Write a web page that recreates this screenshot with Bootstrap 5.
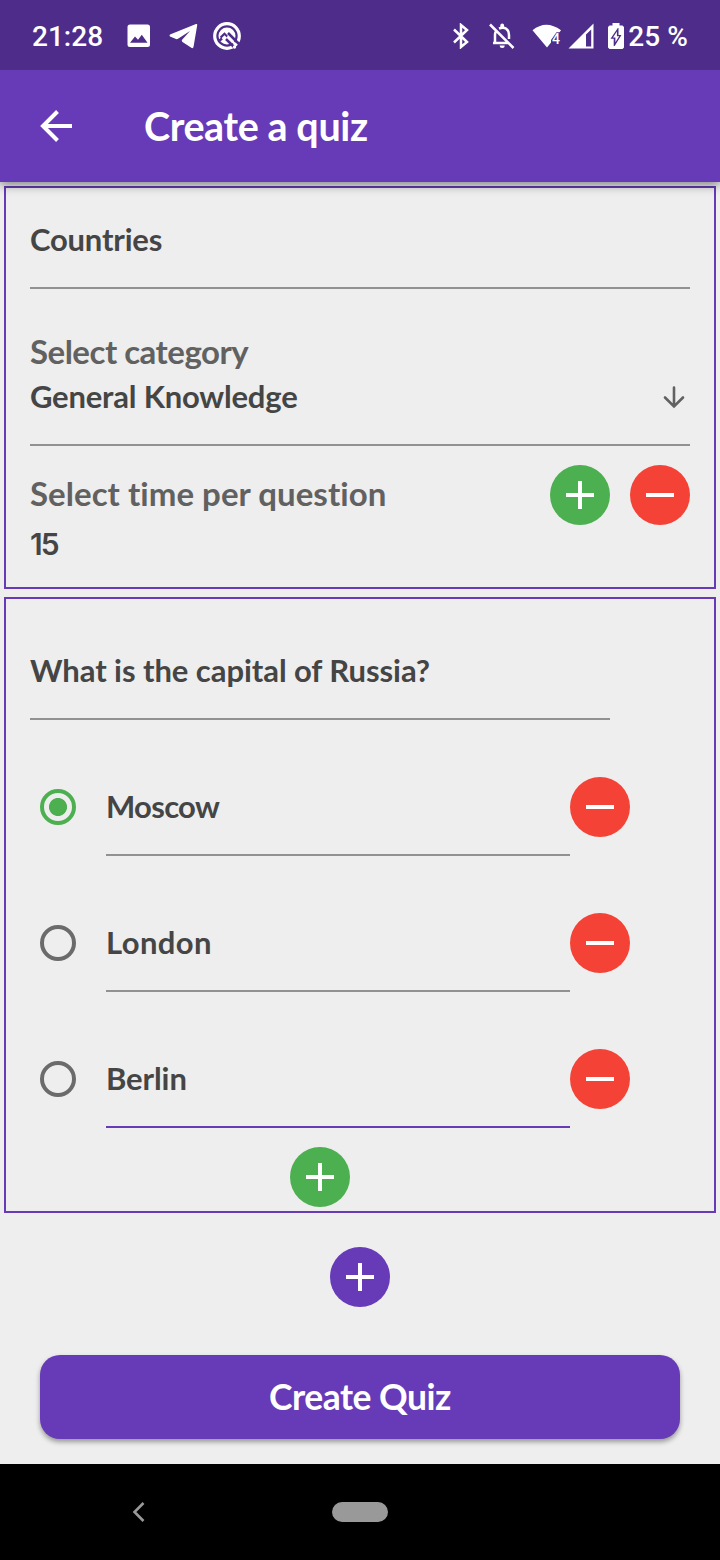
<!DOCTYPE html>
<html lang="en">
<head>
<meta charset="utf-8">
<meta name="viewport" content="width=device-width, initial-scale=1">
<title>Create a quiz</title>
<link href="https://cdn.jsdelivr.net/npm/bootstrap@5.3.0/dist/css/bootstrap.min.css" rel="stylesheet">
<style>
  :root { --violet: #673ab7; --leaf: #4caf50; --tomato: #f44336; --ink: #454545; --muted: #616161; }
  body { width: 720px; height: 1560px; background: #eee; font-family: Lato, "Open Sans", sans-serif; color: var(--ink); overflow: hidden; }
  svg { display: block; flex: none; }
  .status-bar { height: 70px; background: #4e2c8a; padding: 2px 32px 0; font: 500 28px/1 Roboto, sans-serif; z-index: 2; }
  .status-bar span { padding-top: 2px; }
  .app-bar { height: 112px; background: var(--violet); padding: 0 40px; position: relative; z-index: 1; box-shadow: 0 3px 10px rgba(0,0,0,.45); }
  .app-title { font-size: 39.500px; font-weight: 700; letter-spacing: -.4px; margin: 0 0 1px 72px; line-height: 1; }
  .panel { border: 2px solid var(--violet); margin: 0 4px; padding: 0 24px; }
  .panel-setup { margin-top: 4px; height: 403px; padding-top: 3px; }
  .panel-question { margin-top: 8px; height: 616px; padding-top: 23px; }
  .field { height: 98px; border-bottom: 2px solid #919191; display: flex; align-items: center; font-size: 31px; font-weight: 700; line-height: 1; letter-spacing: -.2px; }
  .field.active { border-color: var(--violet); }
  .question-col { width: 580px; }
  .caption-text { color: var(--muted); font-size: 33px; font-weight: 700; line-height: 1; letter-spacing: -.5px; }
  .category { height: 157px; padding-top: 46px; border-bottom: 2px solid #919191; }
  .value-text { font-size: 31px; font-weight: 700; line-height: 32px; letter-spacing: -.2px; }
  .time-value { font-family: Inter, sans-serif; font-size: 30px; font-weight: 600; letter-spacing: -2px; }
  .disc { width: 60px; height: 60px; padding: 0; border: 0; border-radius: 50%; display: flex; align-items: center; justify-content: center; flex: none; }
  .disc-add { background: var(--leaf); } .disc-del { background: var(--tomato); } .disc-main { background: var(--violet); }
  .answer { padding-top: 38px; width: 600px; }
  .pick { width: 36px; height: 36px; border: 4px solid #6b6b6b; border-radius: 50%; margin: 0 30px 0 10px; flex: none; }
  .pick.on { border-color: var(--leaf); background: radial-gradient(circle, var(--leaf) 8.6px, transparent 9.4px); }
  .btn-create { height: 84px; margin: 48px 40px 25px; border-radius: 20px; background: var(--violet) !important; color: #fff !important; border: 0; font-size: 35.500px; font-weight: 700; letter-spacing: -.5px; box-shadow: 0 3px 5px rgba(0,0,0,.36); line-height: 1; padding: 0; }
  .nav-keys { height: 96px; background: #000; padding-left: 132px; }
  .home-pill { width: 56px; height: 20px; background: #999; margin-left: 186px; }
</style>
</head>
<body class="d-flex flex-column">
<header>
  <div class="status-bar d-flex align-items-center text-white position-relative">
    <span>21:28</span>
    <svg style="margin-left:24px;margin-top:-1px" width="24" height="24" viewBox="0 0 24 24"><path fill="#fff" fill-rule="evenodd" d="M3 .5h17.500a2.500 2.500 0 0 1 2.500 2.500v17.500a2.500 2.500 0 0 1-2.500 2.500H3A2.500 2.500 0 0 1 .5 20.500V3A2.500 2.500 0 0 1 3 .5zM3 18.800h17.500l-5.700-8-3.800 5-3-3.300z"/></svg>
    <svg style="margin-left:18px" width="30" height="26" viewBox="0 0 30 26"><path fill="#fff" d="M1 11.500 27 1q1.500-.5 1.200 1.200L24.500 24q-.5 1.800-2.200.8L13.500 19q-1.500-1-.2-2.400L21 8 9 15.800q-1 .6-2 .2L1 13.500Q0 12.500 1 11.500z"/></svg>
    <svg style="margin-left:14px;margin-top:-1px" width="30" height="30" viewBox="0 0 30 30" fill="none"><circle cx="14" cy="15" r="12.300" stroke="#fff" stroke-width="3.200"/><circle cx="14" cy="15" r="8.500" fill="#fff"/><path fill="#4e2c8a" d="m7 15.500 4.500-4.200L15 15l-1.200 1.500-2.300-2.300L8 17.800z"/><path stroke="#4e2c8a" stroke-width="2.600" d="M6.500 19.500 9 17.500M15 12l12 12M13 18l9.500 9.500"/><path stroke="#fff" stroke-width="2.200" d="m14.500 15.500 7.500 7.500"/><circle cx="21.500" cy="26" r="1.700" fill="#fff"/></svg>
    <svg class="ms-auto" width="18" height="26" viewBox="0 0 18 26" fill="none" stroke="#fff" stroke-width="2.500"><path d="m2 6.500 13 12.500-6 5V2l6 5L2 19.500"/></svg>
    <svg style="margin-left:19px" width="26" height="26" viewBox="0 0 26 26" fill="none" stroke="#fff" stroke-width="2.500"><path d="M1 1.500 24.500 25M4 20h16M6 19v-7q0-2 1-4M10 5.500c6-2.500 10 1 10 6.500v4"/><path fill="#fff" stroke="none" d="M11.300 4V2.500a1.900 1.900 0 0 1 3.800 0V4zM10.700 22.500h5a2.500 2.500 0 0 1-5 0z"/></svg>
    <svg style="margin-left:17px" width="31" height="25" viewBox="0 0 31 25"><path fill="#fff" d="M.5 6.200Q14-4.800 29 6.200L27.500 8.200h-3L19 16v2.500L15 23.500z"/><text x="20" y="19.500" fill="#fff" font-family="Roboto, sans-serif" font-weight="500" font-size="14">4</text></svg>
    <svg style="margin-left:5px" width="26" height="26" viewBox="0 0 26 26"><path fill="#fff" fill-rule="evenodd" d="M.5 25.500 25.500.5v25zM18 11.500v12h5.200V6.500z"/></svg>
    <svg style="margin-left:14px" width="16" height="26" viewBox="0 0 16 26"><path fill="#fff" d="M4.500 0h7v2.500h3L16 4v20.500L14.500 26h-13L0 24.500V4l1.500-1.500h3z"/><path fill="#4e2c8a" d="M9.800 5 2.500 15.800h3.200V23h1L13.500 12h-3V5z"/><path fill="#fff" d="M8.900 8.500 5 14.500h2.400v4.700l3.800-6H8.900z"/></svg>
    <span style="margin-left:4px;margin-right:0;letter-spacing:.1px">25 %</span>
  </div>
  <nav class="app-bar d-flex align-items-center text-white">
    <svg width="32" height="32" viewBox="0 0 32 32" fill="none" stroke="#fff" stroke-width="4"><path d="M32 16H4M17.500 1.500 3 16l14.500 14.500"/></svg>
    <div class="app-title">Create a quiz</div>
  </nav>
</header>
<main class="d-flex flex-column flex-grow-1">
  <section class="panel panel-setup">
    <div class="field">Countries</div>
    <div class="category">
      <div class="caption-text">Select category</div>
      <div class="d-flex align-items-center justify-content-between" style="margin-top:12px">
        <div class="value-text">General Knowledge</div>
        <svg class="me-1" style="margin-top:2px" width="24" height="24" viewBox="0 0 24 24" fill="none" stroke="#616161" stroke-width="2.600" stroke-linecap="round"><path d="M12 2.500V21M3 12.500l9 9 9-9"/></svg>
      </div>
    </div>
    <div class="d-flex align-items-center" style="margin-top:19px;gap:20px">
      <div class="caption-text me-auto pb-1" style="letter-spacing:.04px">Select time per question</div>
      <button type="button" class="disc disc-add" aria-label="More time"><svg width="28" height="28" stroke="#fff" stroke-width="4"><path d="M0 14h28M14 0v28"/></svg></button>
      <button type="button" class="disc disc-del" aria-label="Less time"><svg width="28" height="4"><rect width="28" height="4" fill="#fff"/></svg></button>
    </div>
    <div class="value-text time-value" style="margin-top:3px">15</div>
  </section>

  <section class="panel panel-question">
    <div class="question-col">
      <div class="field" style="letter-spacing:-.06px">What is the capital of Russia?</div>
      <div class="answer d-flex align-items-center">
        <span class="pick on"></span><div class="field flex-grow-1" style="letter-spacing:-.7px">Moscow</div>
        <button type="button" class="disc disc-del" aria-label="Remove"><svg width="28" height="4"><rect width="28" height="4" fill="#fff"/></svg></button>
      </div>
      <div class="answer d-flex align-items-center">
        <span class="pick"></span><div class="field flex-grow-1" style="letter-spacing:.4px">London</div>
        <button type="button" class="disc disc-del" aria-label="Remove"><svg width="28" height="4"><rect width="28" height="4" fill="#fff"/></svg></button>
      </div>
      <div class="answer d-flex align-items-center">
        <span class="pick"></span><div class="field active flex-grow-1" style="letter-spacing:-.1px">Berlin</div>
        <button type="button" class="disc disc-del" aria-label="Remove"><svg width="28" height="4"><rect width="28" height="4" fill="#fff"/></svg></button>
      </div>
      <button type="button" class="disc disc-add mx-auto" style="margin-top:19px" aria-label="Add answer"><svg width="28" height="28" stroke="#fff" stroke-width="4"><path d="M0 14h28M14 0v28"/></svg></button>
    </div>
  </section>

  <button type="button" class="disc disc-main mx-auto" style="margin-top:34px" aria-label="Add question"><svg width="28" height="28" stroke="#fff" stroke-width="4"><path d="M0 14h28M14 0v28"/></svg></button>
  <button type="button" class="btn btn-create">Create Quiz</button>
</main>
<footer class="nav-keys d-flex align-items-center">
  <svg width="14" height="20" viewBox="0 0 14 20" fill="none" stroke="#999" stroke-width="2.600"><path d="M11.500 1 2.500 10l9 9"/></svg>
  <div class="home-pill rounded-pill"></div>
</footer>
<script src="https://cdn.jsdelivr.net/npm/bootstrap@5.3.0/dist/js/bootstrap.bundle.min.js"></script>
</body>
</html>
